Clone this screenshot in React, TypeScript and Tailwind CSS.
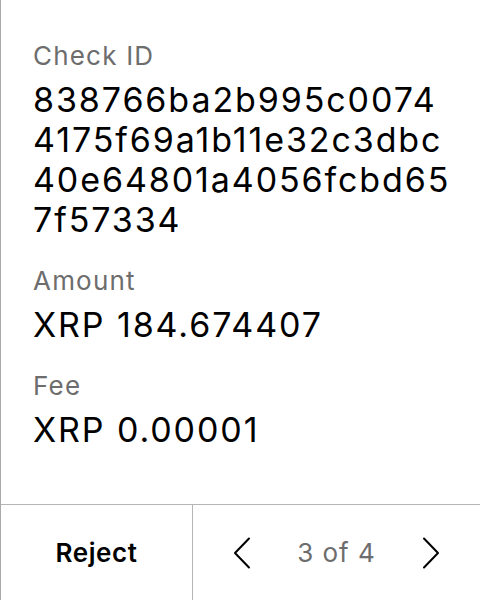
const Field = ({ label, lines }: { label: string; lines: string[] }) => (
  <div className="flex flex-col">
    <div className="text-[26px] leading-[30px] tracking-[1.2px] text-[#6d6d6d]">{label}</div>
    <div className="mt-[9px] text-[34px] leading-[40px] tracking-[1.9px] text-black">
      {lines.map((l) => (
        <div key={l}>{l}</div>
      ))}
    </div>
  </div>
)

export default function App() {
  return (
    <div
      className="flex h-[600px] w-[480px] flex-col border-l border-[#a9a9a9] bg-white"
      style={{ fontFamily: "Inter, 'Noto Sans', sans-serif" }}
    >
      <div className="flex flex-1 flex-col gap-[26px] pl-[32px] pt-[41px]">
        <Field
          label="Check ID"
          lines={["838766ba2b995c0074", "4175f69a1b11e32c3dbc", "40e64801a4056fcbd65", "7f57334"]}
        />
        <Field label="Amount" lines={["XRP 184.674407"]} />
        <Field label="Fee" lines={["XRP 0.00001"]} />
      </div>
      <div className="flex h-[96px] border-t border-[#b5b5b5]">
        <button className="flex w-[192px] items-center justify-center border-r border-[#b5b5b5] text-[26px] font-semibold tracking-[0.6px] text-black">
          Reject
        </button>
        <div className="flex flex-1 items-center justify-center gap-[46px]">
          <svg width="18" height="32" viewBox="0 0 18 32" fill="none" stroke="black" strokeWidth="2" strokeLinecap="round" strokeLinejoin="round">
            <polyline points="16,1.5 2,16 16,30.5" />
          </svg>
          <span className="text-[26px] tracking-[1px] text-[#6d6d6d]">3 of 4</span>
          <svg width="18" height="32" viewBox="0 0 18 32" fill="none" stroke="black" strokeWidth="2" strokeLinecap="round" strokeLinejoin="round">
            <polyline points="2,1.5 16,16 2,30.5" />
          </svg>
        </div>
      </div>
    </div>
  )
}
